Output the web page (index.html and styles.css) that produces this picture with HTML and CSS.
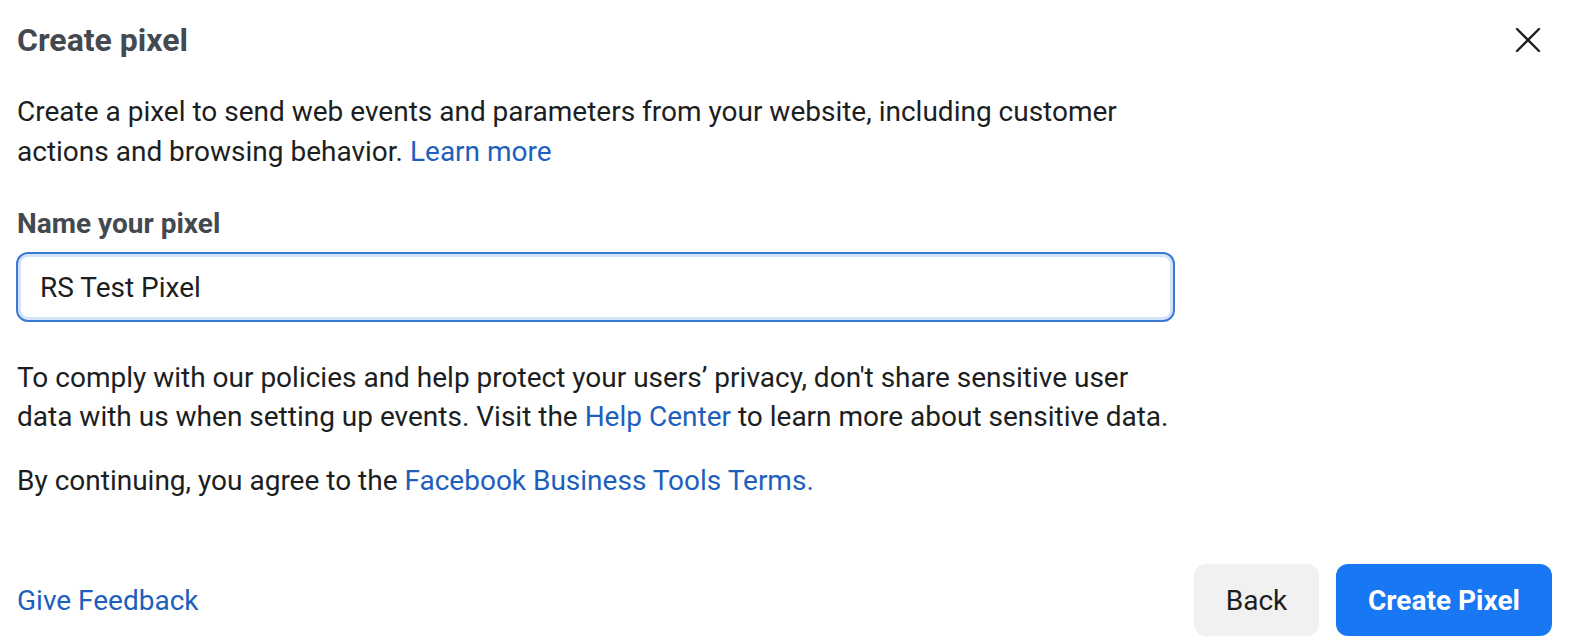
FILE: index.html
```html
<!DOCTYPE html>
<html lang="en">
<head>
    <meta charset="UTF-8">
    <meta name="viewport" content="width=device-width, initial-scale=1.0">
    <title>Create pixel</title>
    <link rel="stylesheet" href="styles.css">
</head>
<body>

    <div class="dialog">
        <div class="dialog-header">
            <h1 class="dialog-title">Create pixel</h1>
            <button class="close-btn" aria-label="Close">
                <svg width="26" height="26" viewBox="0 0 26 26">
                    <path d="M2 2 L24 24 M24 2 L2 24" stroke="#1c1e21" stroke-width="2.4" stroke-linecap="round" fill="none"/>
                </svg>
            </button>
        </div>

        <div class="dialog-body">
            <p class="intro">
                Create a pixel to send web events and parameters from your website, including customer
                actions and browsing behavior. <a href="#">Learn more</a>
            </p>

            <label class="field-label" for="pixel-name">Name your pixel</label>
            <input class="field-input" id="pixel-name" type="text" value="RS Test Pixel">

            <p class="notice">
                To comply with our policies and help protect your users’ privacy, don't share sensitive user
                data with us when setting up events. Visit the <a href="#">Help Center</a> to learn more about sensitive data.
            </p>

            <p class="terms">
                By continuing, you agree to the <a href="#">Facebook Business Tools Terms.</a>
            </p>
        </div>

        <div class="dialog-footer">
            <a href="#" class="feedback">Give Feedback</a>
            <div class="actions">
                <button class="btn btn-back">Back</button>
                <button class="btn btn-primary">Create Pixel</button>
            </div>
        </div>
    </div>

</body>
</html>
```

FILE: styles.css
```css
/* Reset */
* {
    margin: 0;
    padding: 0;
    box-sizing: border-box;
    font-family: Roboto, "Liberation Sans", Arial, sans-serif;
}

body {
    background: #fff;
    color: #1c1e21;
}

a {
    color: #1d5fbd;
    text-decoration: none;
}

/* Dialog */
.dialog {
    padding: 22px 22px 10px 17px;
}

.dialog-header {
    display: flex;
    justify-content: space-between;
    align-items: center;
}

.dialog-title {
    font-size: 32px;
    line-height: 36px;
    font-weight: 700;
    color: #444950;
}

.close-btn {
    background: none;
    border: none;
    width: 26px;
    height: 26px;
    margin-right: 11px;
    display: flex;
}

/* Body */
.dialog-body {
    max-width: 1157px;
    font-size: 28px;
    line-height: 40px;
}

.intro {
    margin-top: 34px;
}

.field-label {
    display: block;
    margin-top: 36px;
    font-weight: 700;
    line-height: 32px;
    color: #444950;
}

.field-input {
    display: block;
    width: 1159px;
    height: 70px;
    margin-top: 12px;
    margin-left: -1px;
    padding: 0 22px;
    font-size: 28px;
    color: #1c1e21;
    border: 2px solid #3a78d6;
    border-radius: 12px;
    box-shadow: inset 0 0 0 3px #d4e3f8;
    outline: none;
}

.notice {
    margin-top: 36px;
    line-height: 39px;
}

.terms {
    margin-top: 25px;
}

/* Footer */
.dialog-footer {
    display: flex;
    justify-content: space-between;
    align-items: center;
    margin-top: 63px;
}

.feedback {
    font-size: 28px;
}

.actions {
    display: flex;
    gap: 17px;
}

.btn {
    height: 72px;
    border: none;
    border-radius: 12px;
    font-size: 28px;
    cursor: pointer;
}

.btn-back {
    width: 125px;
    background: #f1f1f1;
    color: #1c1e21;
}

.btn-primary {
    width: 216px;
    background: #1877f2;
    color: #fff;
    font-weight: 700;
}
```
